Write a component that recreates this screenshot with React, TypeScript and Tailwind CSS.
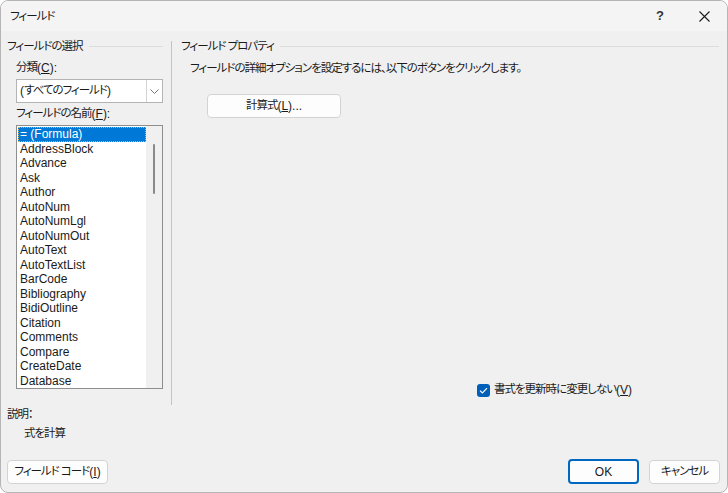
import React from "react"

const font = "font-['Liberation_Sans','Noto_Sans_CJK_JP',sans-serif] [font-feature-settings:'palt']"

const fields = [
  "= (Formula)",
  "AddressBlock",
  "Advance",
  "Ask",
  "Author",
  "AutoNum",
  "AutoNumLgl",
  "AutoNumOut",
  "AutoText",
  "AutoTextList",
  "BarCode",
  "Bibliography",
  "BidiOutline",
  "Citation",
  "Comments",
  "Compare",
  "CreateDate",
  "Database",
]

// Japanese runs are narrower in the original UI font
function Jp({ children }: { children: React.ReactNode }) {
  return <span className="text-[11.5px] tracking-[-1px]">{children}</span>
}

function GroupHeader({ label }: { label: string }) {
  return (
    <div className="flex items-center h-4">
      <span className="whitespace-nowrap"><Jp>{label}</Jp></span>
      <div className="flex-1 h-px bg-[#dcdcdc] ml-[6px]" />
    </div>
  )
}

function Button({ children, primary = false, className = "" }: { children: React.ReactNode; primary?: boolean; className?: string }) {
  return (
    <button
      className={`h-[24px] rounded-[4px] bg-[#fdfdfd] flex items-center justify-center ${
        primary ? "border-2 border-[#0067c0]" : "border border-[#d3d3d3]"
      } ${className}`}
    >
      {children}
    </button>
  )
}

export default function App() {
  return (
    <div className={`w-[728px] h-[493px] bg-[#f0f0f0] text-[12px] text-[#1a1a1a] border border-[#b5b5b5] rounded-[8px] overflow-hidden flex flex-col ${font}`}>
      {/* title bar */}
      <div className="h-[30px] shrink-0 bg-[#f4f4f4] flex items-center pl-[9px]">
        <span className="flex-1"><Jp>フィールド</Jp></span>
        <span className="w-[46px] text-center text-[13px] font-bold text-[#333] mr-[-2px]">?</span>
        <span className="w-[46px] flex justify-center">
          <svg width="11" height="11" viewBox="0 0 11 11">
            <path d="M0.5 0.5 L10.5 10.5 M10.5 0.5 L0.5 10.5" stroke="#1a1a1a" strokeWidth="1.1" />
          </svg>
        </span>
      </div>

      {/* main */}
      <div className="flex pt-[7px] h-[374px] shrink-0">
        {/* left */}
        <div className="w-[170px] shrink-0 pl-[6px] pr-[8px]">
          <GroupHeader label="フィールドの選択" />
          <div className="pl-[9px] mt-[6px] h-4 flex items-center">
            <Jp>分類</Jp>(<span className="underline">C</span>):
          </div>
          <div className="ml-[9px] mt-[3px] h-[24px] bg-white border border-[#b4b4b4] flex">
            <div className="flex-1 pl-[3px] flex items-center">
              (<Jp>すべてのフィールド</Jp>)
            </div>
            <div className="w-[16px] border-l border-[#d5d5d5] flex items-center justify-center">
              <svg width="9" height="5" viewBox="0 0 9 5">
                <path d="M0.5 0.5 L4.5 4.5 L8.5 0.5" fill="none" stroke="#777" strokeWidth="1" />
              </svg>
            </div>
          </div>
          <div className="pl-[9px] mt-[3px] h-4 flex items-center">
            <Jp>フィールドの名前</Jp>(<span className="underline">F</span>):
          </div>
          <div className="ml-[9px] mt-[3px] h-[264px] bg-white border border-[#8e8e8e] flex">
            <div className="flex-1 pt-px pl-px leading-[14.5px]">
              {fields.map((f, i) => (
                <div
                  key={f}
                  className={
                    i === 0
                      ? "bg-[#0078d7] text-white pl-[2px] outline-1 outline-dotted outline-[#d8b36a] -outline-offset-1"
                      : "pl-[2px]"
                  }
                >
                  {f}
                </div>
              ))}
            </div>
            <div className="w-[16px] bg-[#f0f0f0] flex justify-center pt-[18px]">
              <div className="w-[2px] h-[50px] rounded-full bg-[#8a8a8a]" />
            </div>
          </div>
        </div>

        {/* separator */}
        <div className="w-px mt-[3px] bg-[#c4c4c4] shrink-0" />

        {/* right */}
        <div className="flex-1 pl-[9px] pr-[8px] flex flex-col">
          <GroupHeader label="フィールド プロパティ" />
          <div className="pl-[9px] mt-[7px] h-4 flex items-center">
            <Jp>フィールドの詳細オプションを設定するには、以下のボタンをクリックします。</Jp>
          </div>
          <Button className="ml-[26px] mt-[17px] w-[134px]">
            <Jp>計算式</Jp>(<span className="underline">L</span>)...
          </Button>
          <div className="mt-auto mb-[7px] pl-[296px] flex items-center h-4">
            <span className="w-[13px] h-[13px] rounded-[3px] bg-[#005fb8] flex items-center justify-center mr-[4px]">
              <svg width="9" height="7" viewBox="0 0 9 7">
                <path d="M1 3.6 L3.4 6 L8 1.2" fill="none" stroke="white" strokeWidth="1.2" />
              </svg>
            </span>
            <Jp>書式を更新時に変更しない</Jp>(<span className="underline">V</span>)
          </div>
        </div>
      </div>

      {/* description */}
      <div className="pl-[6px] mt-[2px] h-4 flex items-center"><Jp>説明：</Jp></div>
      <div className="pl-[23px] mt-[3px] h-4 flex items-center"><Jp>式を計算</Jp></div>

      {/* buttons */}
      <div className="mt-auto mb-[8px] flex items-center px-[6px]">
        <Button className="w-[101px]">
          <Jp>フィールド コード</Jp>(<span className="underline">I</span>)
        </Button>
        <div className="flex-1" />
        <Button primary className="w-[71px] h-[25px]">OK</Button>
        <Button className="w-[71px] ml-[10px] mr-[1px]"><Jp>キャンセル</Jp></Button>
      </div>
    </div>
  )
}
